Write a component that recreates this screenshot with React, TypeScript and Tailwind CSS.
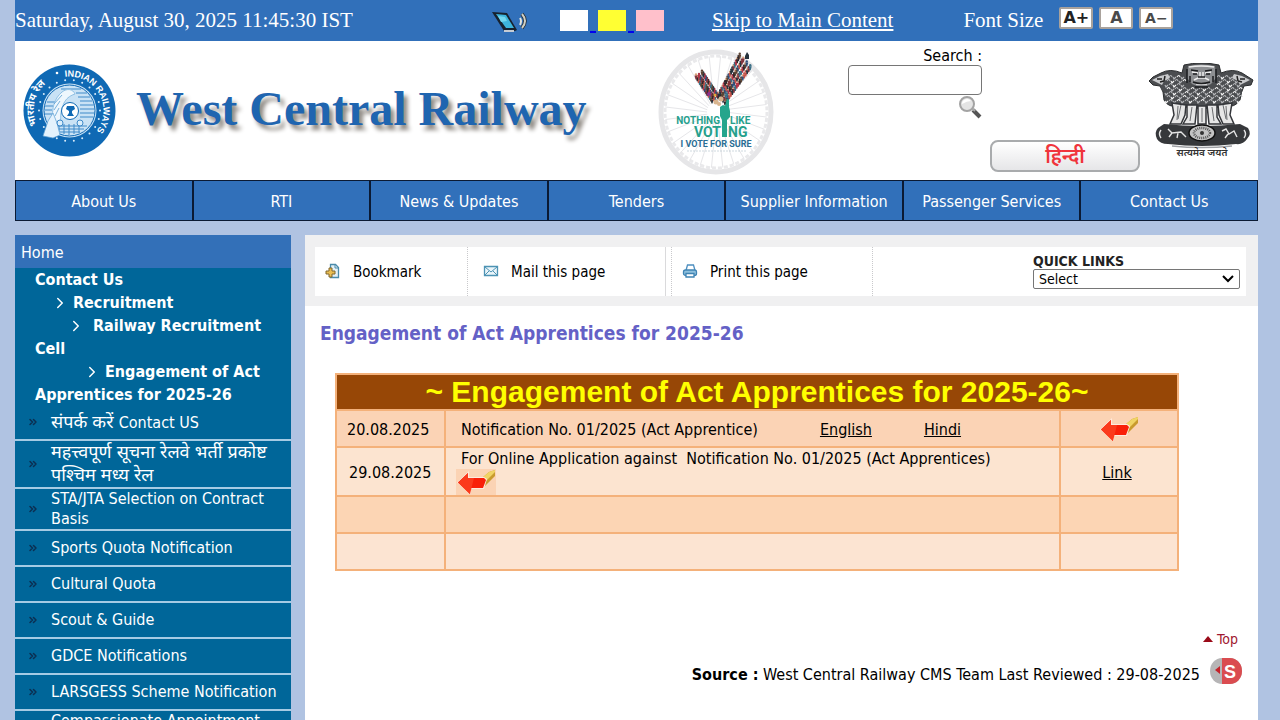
import { useState } from "react";
import { ChevronRight, ChevronsRight } from "lucide-react";

interface MenuItem {
  hindi?: string;
  label?: string;
}

const NAV = [
  "About Us",
  "RTI",
  "News & Updates",
  "Tenders",
  "Supplier Information",
  "Passenger Services",
  "Contact Us",
];

const MENU: MenuItem[] = [
  { hindi: "संपर्क करें", label: "Contact US" },
  { hindi: "महत्त्वपूर्ण सूचना रेलवे भर्ती प्रकोष्ट पश्चिम मध्य रेल" },
  { label: "STA/JTA Selection on Contract Basis" },
  { label: "Sports Quota Notification" },
  { label: "Cultural Quota" },
  { label: "Scout & Guide" },
  { label: "GDCE Notifications" },
  { label: "LARSGESS Scheme Notification" },
  { label: "Compassionate Appointment Notification" },
];

const THEMES = [
  { name: "White", className: "bg-white" },
  { name: "Yellow", className: "bg-[#ffff33]" },
  { name: "Pink", className: "bg-[#ffc0cb]" },
];

function RailwayLogo() {
  const dots = Array.from({ length: 22 }, (_, i) => (i * 2 * Math.PI) / 22);
  return (
    <svg viewBox="0 0 93 93" className="size-[93px] shrink-0" role="img" aria-label="Indian Railways">
      <defs>
        <path id="ringRight" d="M 42 12.800 A 34 34 0 0 1 60 77.700" />
        <path id="ringLeft" d="M 14 61 A 35 35 0 0 1 38 12" />
      </defs>
      <circle cx="46.5" cy="46.5" r="46" fill="#0f69b4" />
      <text fontFamily="Liberation Sans, Arial, sans-serif" fontSize="9" fontWeight="700" fill="#fff">
        <textPath href="#ringRight">INDIAN RAILWAYS</textPath>
      </text>
      <text fontFamily="Noto Sans, sans-serif" fontSize="10" fontWeight="700" fill="#fff">
        <textPath href="#ringLeft">भारतीय रेल</textPath>
      </text>
      <circle cx="34" cy="9" r="1.3" fill="#fff" />
      {dots.map((a) => (
        <circle key={a} cx={46.5 + 30.5 * Math.cos(a)} cy={46.5 + 30.5 * Math.sin(a)} r="1" fill="#d9ecfa" />
      ))}
      <circle cx="46.5" cy="46.5" r="27" fill="#c9e2f5" />
      <circle cx="46.5" cy="46.5" r="25.5" fill="none" stroke="#0f69b4" strokeWidth="1" />
      <g stroke="#3f8ac9" strokeWidth="1">
        <path d="M38 25h20M53 29h11M55 33h12M57 37h12M57 41h14M57 45h14M57 49h14M57 53h13M24 38h9M22 42h8M22 46h7M22 50h7" />
        <path d="M30 62h34M32 65h29M37 68h20M36 60v8M41 60v10M46 60v11M51 60v10M56 60v9" />
      </g>
      {/* locomotive */}
      <path d="M30 59c-2-16 2-25 9-31 5-4 11-3 13 2-6 2-9 5-11 9-3 6-4 13-3 20z" fill="#eef7fd" stroke="#8fc0e4" />
      <path d="M20 72l5-15 5-8 4 10 3 12-7 3z" fill="#e4f2fc" stroke="#5b9fd3" strokeWidth=".7" />
      <path d="M31 40l8-9M31 46l6-9M32 52l4-8" stroke="#5b9fd3" strokeWidth=".8" />
      <circle cx="37" cy="59" r="3" fill="#dbeefb" stroke="#3f8ac9" />
      <circle cx="57" cy="59" r="3" fill="#dbeefb" stroke="#3f8ac9" />
      <circle cx="47" cy="47" r="8.5" fill="#fff" stroke="#0f69b4" strokeWidth="1" />
      <path d="M44 42h7l1 3-3 2v2l2 3h-7l2-3v-2l-3-2z" fill="#0f69b4" />
    </svg>
  );
}

function VotingLogo() {
  const spokes = Array.from({ length: 28 }, (_, i) => (i * 2 * Math.PI) / 28);
  const colors = ["#26333d", "#b23346", "#2d4d77", "#83343c", "#30262a", "#c4524a", "#3a6f86", "#5c4434"];
  const rightArm = Array.from({ length: 72 }, (_, i) => {
    const t = Math.floor(i / 4) / 17;
    const side = ((i % 4) - 1.5) * (2 + 1.5 * t);
    return { x: 81 + 23 * t + side, y: 56 - 37 * t + side * 0.8 + ((i * 5) % 4), c: colors[(i * 3 + (i % 5)) % 8] };
  });
  const leftArm = Array.from({ length: 42 }, (_, i) => {
    const t = Math.floor(i / 3) / 13;
    const side = ((i % 3) - 1) * 3;
    return { x: 74 - 16 * t + side, y: 57 - 24 * t - side * 0.8 + ((i * 5) % 3), c: colors[(i * 5 + (i % 3)) % 8] };
  });
  return (
    <svg viewBox="16 7 118 128" className="h-[128px] w-[118px] shrink-0" role="img" aria-label="Nothing like voting">
      <ellipse cx="75" cy="71" rx="55" ry="60" fill="#fff" stroke="#e6e6e8" strokeWidth="5" />
      <ellipse cx="75" cy="71" rx="51" ry="56" fill="none" stroke="#e9e9eb" strokeWidth="3" strokeDasharray="4 2" />
      {spokes.map((a) => (
        <line
          key={a}
          x1={75 + 9 * Math.cos(a)}
          y1={71 + 10 * Math.sin(a)}
          x2={75 + 51 * Math.cos(a + 0.09)}
          y2={71 + 56 * Math.sin(a + 0.09)}
          stroke="#e6e6e9"
        />
      ))}
      {[...leftArm, ...rightArm].map((p, i) => (
        <g key={i} fill={p.c}>
          <circle cx={p.x} cy={p.y - 2} r="1.2" fill={i % 3 ? p.c : "#d9a27c"} />
          <path d={`M${p.x - 1.5} ${p.y - 1}h3l-1 4h-1z`} />
        </g>
      ))}
      <path d="M106 11l2 3v4h-4v-3z" fill="#26333d" />
      <g fill="#d8b48e">
        <circle cx="75" cy="61" r="2.5" />
        <circle cx="80" cy="58" r="2.5" />
        <circle cx="78" cy="63" r="2" />
      </g>
      <circle cx="68" cy="53" r="2" fill="#8b2f8f" />
      <circle cx="74" cy="54" r="1.5" fill="#e0a83a" />
      <path d="M85.500 59q1.500-2 2.500 0v7l1 4v6l-3 3v17h-5V79l-2-4v-9l3-2 2 1z" fill="#25a58c" />
      <g fontFamily="Liberation Sans Narrow, Roboto, sans-serif" fontWeight="700" fill="#26a08c">
        <text x="79" y="83" fontSize="10" textAnchor="end">NOTHING</text>
        <text x="89" y="83" fontSize="10">LIKE</text>
        <text x="80" y="96" fontSize="14" textAnchor="end">VOT</text>
        <text x="87" y="96" fontSize="14">NG</text>
        <text x="75" y="106" fontSize="9" textAnchor="middle" fill="#2a6d94">I VOTE FOR SURE</text>
      </g>
      <path d="M46 110h60" stroke="#aebfca" strokeDasharray="2 1" strokeWidth=".6" />
    </svg>
  );
}

function NationalEmblem() {
  // short curled strokes that shade the manes
  const curls = Array.from({ length: 19 * 7 }, (_, i) => ({
    x: 17 + (i % 19) * 4 + (Math.floor(i / 19) % 2) * 2,
    y: 14 + Math.floor(i / 19) * 4,
  })).filter((c) => c.y > 24 || c.x < 36 || c.x > 67);
  return (
    <svg viewBox="0 0 106 96" className="h-24 w-[106px]" role="img" aria-label="National emblem of India">
      {/* manes of the three lions */}
      <path
        d="M36 2q17-4 35 0l2 8q12-5 21 0l11 7-2 5-7 1q-3 6-4 14-5 8-15 6-23 5-46 0-11 2-15-6 0-9-4-14l-7-1-4-4 4-4 8-4q9-5 21 0z"
        fill="#4b4d50"
        stroke="#2a2c2e"
      />
      {curls.map((c, i) => (
        <path
          key={i}
          d={i % 2 ? `M${c.x} ${c.y}q2-3 3 0` : `M${c.x} ${c.y}l1 2 2-2`}
          stroke={i % 3 === 0 ? "#f4f4f4" : "#b4b5b8"}
          strokeWidth="1.200"
          fill="none"
        />
      ))}
      {/* side faces */}
      <path d="M4 17l8-4 8-2 2 4-6 3-2 4-4-2zM102 17l-8-4-8-2-2 4 6 3 2 4 4-2z" fill="#c9cacc" />
      <path d="M9 16h5M12 19l4-1M97 16h-5M94 19l-4-1M17 13l-1 5M89 13l1 5" stroke="#222" strokeWidth="1.500" />
      {/* centre face */}
      <path d="M40 3q13-3 27 0l1 12-5 6q-9 5-19 0l-5-6z" fill="#8d8f92" />
      <path d="M41 4q12-2 25 0M44 9l6 1M63 9l-6 1M52 9v6M55 9v6M46 17l4-2h7l4 2M48 21h11" stroke="#ededed" strokeWidth="1.500" fill="none" />
      <path d="M43 7l7 1M64 7l-7 1M45 11h4M58 11h4M50 14h7M45 19q8 3 17 0M39 6v14M68 6v14M42 13v6M65 13v6M47 24h13" stroke="#1d1e20" strokeWidth="1.500" fill="none" />
      {/* legs */}
      <g fill="#e6e6e6" stroke="#34363a" strokeWidth="1.500">
        <path d="M24 40l2 12-4 9h11l4-9 1-10zM84 40l-2 12 4 9H75l-4-9-1-10z" />
        <path d="M39 42v12l-4 7h12l2-19zM69 42v12l4 7H61l-2-19z" />
        <path d="M50 43v18h8V43z" />
      </g>
      <path d="M30 43l-1 14M33 42l-3 14M44 44l-2 14M54 45v14M64 44l2 14M78 43l1 14M75 42l3 14" stroke="#6b6d70" fill="none" />
      {/* abacus */}
      <path d="M16 61q38 4 76 0l8 4q4 6-1 11-4 6-11 5-34 4-68 0-8 0-11-5-3-7 1-11z" fill="#36383b" />
      <ellipse cx="54" cy="70" rx="13" ry="8" fill="#c4c4c4" stroke="#111" strokeWidth="1.500" />
      <ellipse cx="54" cy="70" rx="8" ry="5" fill="none" stroke="#555" strokeWidth="2.500" strokeDasharray="1 1" />
      <circle cx="54" cy="70" r="2" fill="#333" />
      <path d="M20 66l4 4 9-1 5 5M24 70l-3 4M30 70l-1 5M74 68l4-2 3 5 5-3 3 6M80 71l-3 4M13 67q-3 4 0 8M96 67q3 4 0 8" stroke="#e4e4e4" strokeWidth="1.400" fill="none" />
      <path d="M24 83q30 3 60 0" stroke="#a0a2a6" strokeWidth="1.500" fill="none" />
      <text x="54" y="93" fontSize="10" fontWeight="600" textAnchor="middle" fontFamily="Noto Sans, sans-serif" fill="#333">
        सत्यमेव जयते
      </text>
    </svg>
  );
}

function RedArrow({ boxed = false }: { boxed?: boolean }) {
  return (
    <svg viewBox="0 0 40 26" className={`inline-block h-[26px] w-10 ${boxed ? "bg-[#fbd3b4]" : ""}`} aria-hidden="true">
      <path d="M26 9l7-6 6-2v6L28 18z" fill="#c99b2e" />
      <path d="M26 9l7-6 6-2v2l-9 9z" fill="#f0d465" />
      <path d="M1 13.500L13 2v6h15l3 2-3 10H15v5z" fill="#ffe9dc" />
      <path d="M2 13.500L12 4v5h16l2 2-3 8H14v6z" fill="#f91f08" />
      <path d="M2 13.500L12 4v5h6l-4 16z" fill="#fb3a1c" />
    </svg>
  );
}

function TabletIcon() {
  return (
    <svg viewBox="0 0 38 22" className="h-[22px] w-[38px]" aria-hidden="true">
      <path d="M1 2l15 1 10 17-2 1H13z" fill="#17222e" />
      <path d="M5 4l10 1 8 13h-8z" fill="#3db5dc" />
      <path d="M7 6l7 1 2 4-6 1z" fill="#72d6ee" />
      <path d="M13 20h10v2H13z" fill="#c6ccd4" />
      <path d="M29 8q2 3 0 7" stroke="#e5e5dd" strokeWidth="2" fill="none" />
      <path d="M31 4q6 7 0 14" stroke="#232a30" strokeWidth="3.500" fill="none" />
      <path d="M31 4q6 7 0 14" stroke="#cfcfc4" strokeWidth="2" fill="none" />
    </svg>
  );
}

function TopBar() {
  return (
    <div className="flex h-[41px] items-center bg-[#3170ba] font-['Liberation_Serif','Times_New_Roman',serif] text-[21px] text-white">
      <span className="w-[476px] shrink-0 whitespace-nowrap">Saturday, August 30, 2025 11:45:30 IST</span>
      <a href="#reader" aria-label="Screen reader access" className="mr-[31px] shrink-0">
        <TabletIcon />
      </a>
      <div className="flex shrink-0">
        {THEMES.map((t, i) => (
          <div key={t.name} className="flex items-end">
            {i > 0 && <span className="mx-0.5 h-0.5 w-1.5 translate-y-0.5 bg-[#0000ee]" />}
            <button type="button" aria-label={`${t.name} theme`} className={`block h-[21px] w-7 ${t.className}`} />
          </div>
        ))}
      </div>
      <a href="#main" className="ml-[48px] shrink-0 whitespace-nowrap underline">
        Skip to Main Content
      </a>
      <span className="ml-[70px] shrink-0 whitespace-nowrap">Font Size</span>
      <div className="ml-4 flex shrink-0 gap-1.5 pb-1.5 font-['DejaVu_Sans','Liberation_Sans',sans-serif] font-bold text-[#4a4a4a]">
        <button type="button" aria-label="Increase font size" className="h-[22px] w-[34px] rounded-xs border-2 border-[#a9a29c] bg-white text-base leading-[18px] text-[#222]">
          A+
        </button>
        <button type="button" aria-label="Normal font size" className="h-[22px] w-[34px] rounded-xs border-2 border-[#a9a29c] bg-white text-base leading-[18px]">
          A
        </button>
        <button type="button" aria-label="Decrease font size" className="h-[22px] w-[34px] rounded-xs border-2 border-[#a9a29c] bg-white text-sm leading-[18px]">
          A−
        </button>
      </div>
    </div>
  );
}

function Banner() {
  const [query, setQuery] = useState("");

  return (
    <header className="flex h-[139px] bg-white">
      <div className="flex w-[642px] shrink-0 items-center pl-2">
        <RailwayLogo />
        <h1 className="ml-5 pb-1 font-['Liberation_Serif','Times_New_Roman',serif] text-5xl font-bold whitespace-nowrap text-[#1f65b0] [text-shadow:4px_5px_4px_#8f8a84]">
          West Central Railway
        </h1>
      </div>
      <div className="pt-[7px]">
        <VotingLogo />
      </div>
      <div className="ml-auto flex shrink-0">
        <form className="flex w-[134px] flex-col items-end pt-1" onSubmit={(e) => e.preventDefault()}>
          <label htmlFor="search" className="pt-0.5 leading-[18px]">
            Search :
          </label>
          <input
            id="search"
            value={query}
            onChange={(e) => setQuery(e.target.value)}
            className="h-[30px] w-full rounded-sm border border-[#767676] bg-white px-1"
          />
          <button type="submit" aria-label="Search">
            <svg viewBox="0 0 24 24" className="size-6" aria-hidden="true">
              <path d="M15 15l7 7" stroke="#555" strokeWidth="4" />
              <path d="M14 13l3 3" stroke="#aaa" strokeWidth="2" />
              <circle cx="9" cy="9" r="7" fill="#e4e4e4" stroke="#a3a3a3" strokeWidth="2" />
              <path d="M4 9a5 5 0 0 1 9-3q-4 0-9 3z" fill="#fff" />
            </svg>
          </button>
        </form>
        <button
          type="button"
          lang="hi"
          className="mr-2 mb-2 ml-2 h-8 w-[150px] self-end rounded-lg border-2 border-[#a9abad] bg-linear-to-b from-white to-[#e6e6e8] text-xl leading-7 font-semibold text-[#f0343c]"
        >
          हिन्दी
        </button>
        <div className="mr-1 pt-[22px]">
          <NationalEmblem />
        </div>
      </div>
    </header>
  );
}

function Sidebar() {
  return (
    <aside className="w-[276px] shrink-0 bg-[#006699] text-white">
      <a href="#home" className="block bg-[#3370b8] px-1.5 pt-1.5 pb-[3px] leading-6">
        Home
      </a>
      <div className="px-5 leading-[23px] font-bold">
        <p>Contact Us</p>
        <p>
          <ChevronRight className="mr-1 ml-4 inline size-[18px] align-text-bottom" />
          Recruitment
        </p>
        <p>
          <ChevronRight className="mr-2 ml-8 inline size-[18px] align-text-bottom" />
          Railway Recruitment Cell
        </p>
        <p>
          <ChevronRight className="mr-1 ml-12 inline size-[18px] align-text-bottom" />
          Engagement of Act Apprentices for 2025-26
        </p>
      </div>
      <ul>
        {MENU.map((item) => (
          <li key={item.label ?? item.hindi} className="border-b-2 border-[#a5cbe4] first:-mt-px">
            <a
              href="#menu"
              className={`flex min-h-[34px] items-center pr-2 pl-3 ${item.hindi ? "leading-[22px]" : "leading-5"}`}
            >
              <ChevronsRight className="mr-3 size-3 shrink-0 text-[#0b2f52]" strokeWidth={3} />
              <span>
                {item.hindi && (
                  <span lang="hi" className="text-lg leading-[22px]">
                    {item.hindi}{" "}
                  </span>
                )}
                {item.label}
              </span>
            </a>
          </li>
        ))}
      </ul>
    </aside>
  );
}

function Toolbar() {
  return (
    <div className="bg-[#f0f0f1] pt-3 pr-3 pb-2.5 pl-2.5 text-[15px]">
      <div className="flex h-[49px] bg-white">
        <a href="#bookmark" className="flex w-[153px] shrink-0 items-center border-r border-dotted border-[#c9c9cc] pt-0.5 pl-2.5">
          <svg viewBox="0 0 16 16" className="mr-3 mb-1 size-4" aria-hidden="true">
            <path d="M5.500 1.500h5l3 3v10h-8z" fill="#e4f1f7" stroke="#4a8bab" strokeWidth="1.300" />
            <path d="M10 1.500V5h3.500" fill="none" stroke="#4a8bab" />
            <path d="M4 5h3v3h3v3H7v3H4v-3H1V8h3z" fill="#e9bd52" stroke="#80672d" />
          </svg>
          Bookmark
        </a>
        <a href="#mail" className="flex w-[198px] shrink-0 items-center border-r border-[#dadadc] pt-0.5 pl-[15px]">
          <svg viewBox="0 0 16 16" className="mr-3 mb-1 size-4" aria-hidden="true">
            <path d="M1.500 3.500h13v9h-13z" fill="#eaf5fa" stroke="#4d93b4" strokeWidth="1.300" />
            <path d="M2 4l6 5 6-5M2 12l4-4M14 12l-4-4" fill="none" stroke="#4d93b4" />
          </svg>
          Mail this page
        </a>
        <a href="#print" className="ml-[5px] flex w-[202px] shrink-0 items-center border-r border-l border-dotted border-[#c9c9cc] pt-0.5 pl-2.5">
          <svg viewBox="0 0 16 16" className="mr-3 mb-1 size-4" aria-hidden="true">
            <path d="M4 7.500L5.500 2h6L13 7.500" fill="#fff" stroke="#4d8fc0" strokeWidth="1.300" />
            <rect x="1.500" y="7" width="13" height="5.500" rx="2" fill="#8fc0dd" stroke="#3f84b4" strokeWidth="1.300" />
            <path d="M4 10.500h8v3.500H4z" fill="#fff" stroke="#3f84b4" strokeWidth="1.300" />
          </svg>
          Print this page
        </a>
        <div className="mr-1.5 ml-auto flex w-[207px] flex-col pt-1.5">
          <label htmlFor="quick" className="text-sm leading-4 font-bold text-[#222]">
            QUICK LINKS
          </label>
          <div className="relative">
            <select
              id="quick"
              defaultValue="Select"
              className="block h-5 w-full appearance-none rounded-xs border border-[#767676] bg-white pl-[5px] text-sm leading-4"
            >
              <option>Select</option>
            </select>
            <svg viewBox="0 0 12 8" className="pointer-events-none absolute top-1.5 right-1.5 h-2 w-3" aria-hidden="true">
              <path d="M1 1l5 5 5-5" fill="none" stroke="#000" strokeWidth="2" />
            </svg>
          </div>
        </div>
      </div>
    </div>
  );
}

function NoticeTable() {
  const cell = "border-2 border-[#f4b17a]";
  return (
    <table className="w-full border-collapse">
      <colgroup>
        <col className="w-[109px]" />
        <col />
        <col className="w-[118px]" />
      </colgroup>
      <thead>
        <tr className="h-9 bg-[#974706]">
          <th
            colSpan={3}
            className={`${cell} font-['Liberation_Sans',Arial,sans-serif] text-3xl leading-[34px] font-bold text-[#ffff00]`}
          >
            ~ Engagement of Act Apprentices for 2025-26~
          </th>
        </tr>
      </thead>
      <tbody>
        <tr className="h-[37px] bg-[#fbd3b5]">
          <td className={`${cell} pt-0.5 pl-2.5`}>20.08.2025</td>
          <td className={`${cell} pt-0.5 pl-[15px]`}>
            <span className="mr-[62px]">Notification No. 01/2025 (Act Apprentice)</span>
            <a href="#english" className="mr-[52px] underline">
              English
            </a>
            <a href="#hindi" className="underline">
              Hindi
            </a>
          </td>
          <td className={`${cell} text-center leading-none`}>
            <RedArrow />
          </td>
        </tr>
        <tr className="h-[49px] bg-[#fce4d0]">
          <td className={`${cell} pt-0.5 pl-3`}>29.08.2025</td>
          <td className={`${cell} pl-2.5 leading-5`}>
            <p className="pl-[5px]">For Online Application against &nbsp;Notification No. 01/2025 (Act Apprentices)</p>
            <RedArrow boxed />
          </td>
          <td className={`${cell} pt-0.5 text-center`}>
            <a href="#apply" className="pr-1 underline">
              Link
            </a>
          </td>
        </tr>
        <tr className="h-[37px] bg-[#fcd5b4]">
          <td className={cell} />
          <td className={cell} />
          <td className={cell} />
        </tr>
        <tr className="h-[37px] bg-[#fce4d2]">
          <td className={cell} />
          <td className={cell} />
          <td className={cell} />
        </tr>
      </tbody>
    </table>
  );
}

export default function App() {
  return (
    <div className="min-h-screen bg-[#b0c3e2] pr-[22px] pl-[15px] font-['DejaVu_Sans_Condensed','Noto_Sans',Tahoma,sans-serif] text-base text-black">
      <TopBar />
      <Banner />
      <nav className="flex h-[41px] bg-[#3170ba] text-white">
        {NAV.map((item) => (
          <a key={item} href="#nav" className="flex flex-1 items-center justify-center border border-[#0b1a33] pt-0.5 whitespace-nowrap">
            {item}
          </a>
        ))}
      </nav>

      <div className="mt-3.5 flex gap-3.5">
        <Sidebar />
        <main id="main" className="min-w-0 flex-1 bg-white">
          <Toolbar />
          <h2 className="px-[15px] pt-[15px] text-[19px] leading-6 font-bold text-[#6461c6]">
            Engagement of Act Apprentices for 2025-26
          </h2>
          <div className="pt-7 pr-[79px] pl-[30px]">
            <NoticeTable />
          </div>
          <div className="flex flex-col items-end pt-[60px] pr-4">
            <a href="#top" className="mr-1 flex items-center gap-1 text-sm leading-4 text-[#a01830]">
              <svg viewBox="0 0 10 6" className="h-1.5 w-2.5" aria-hidden="true">
                <path d="M5 0l5 6H0z" fill="#9a0a18" />
              </svg>
              Top
            </a>
            <div className="mt-2 flex items-center gap-2.5">
              <p className="mt-2">
                <b>Source :</b> West Central Railway CMS Team Last Reviewed : 29-08-2025
              </p>
              <button type="button" aria-label="Share">
                <svg viewBox="0 0 32 26" className="h-[26px] w-8" aria-hidden="true">
                  <path d="M12 0H20A12 13 0 0 1 20 26H12A12 13 0 0 1 12 0z" fill="#b6b5b6" />
                  <path d="M12 0h8a12 13 0 0 1 0 26h-8z" fill="#da4c50" />
                  <path d="M5 12l5-4v8z" fill="#c4232b" />
                  <text x="20" y="20" fontSize="18" fontWeight="700" textAnchor="middle" fontFamily="Liberation Sans, sans-serif" fill="#fff">
                    S
                  </text>
                </svg>
              </button>
            </div>
          </div>
        </main>
      </div>
    </div>
  );
}
